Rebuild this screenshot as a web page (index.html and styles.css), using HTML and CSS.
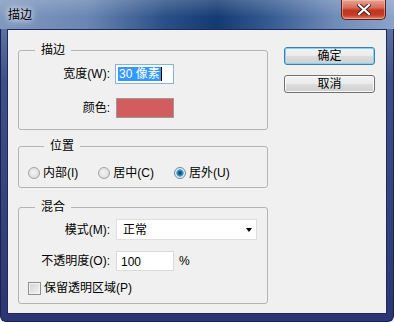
FILE: index.html
```html
<!DOCTYPE html>
<html lang="zh-CN">
<head>
    <meta charset="UTF-8">
    <title>描边</title>
    <link rel="stylesheet" href="styles.css">
</head>
<body>
    <div class="window">
        <div class="titlebar">
            <span class="title">描边</span>
            <span class="close">
                <svg width="14" height="11" viewBox="0 0 14 11">
                    <path d="M2 1 L12 10 M12 1 L2 10" stroke="#3a2020" stroke-width="4" stroke-linecap="square"/>
                    <path d="M2 1 L12 10 M12 1 L2 10" stroke="#ffffff" stroke-width="2.2" stroke-linecap="square"/>
                </svg>
            </span>
        </div>

        <div class="client">
            <div class="main">
                <!-- 描边 -->
                <fieldset class="group g-stroke">
                    <legend>描边</legend>
                    <div class="form">
                        <label>宽度(W):</label>
                        <div class="field focus"><span class="sel">30 像素</span><span class="caret"></span></div>
                        <label>颜色:</label>
                        <div class="swatch"></div>
                    </div>
                </fieldset>

                <!-- 位置 -->
                <fieldset class="group g-pos">
                    <legend>位置</legend>
                    <div class="radios">
                        <span class="radio"><i></i>内部(I)</span>
                        <span class="radio"><i></i>居中(C)</span>
                        <span class="radio checked"><i></i>居外(U)</span>
                    </div>
                </fieldset>

                <!-- 混合 -->
                <fieldset class="group g-blend">
                    <legend>混合</legend>
                    <div class="form">
                        <label>模式(M):</label>
                        <div class="select"><span>正常</span><b class="arrow"></b></div>
                        <label>不透明度(O):</label>
                        <div class="row">
                            <div class="field small">100</div>
                            <span class="unit">%</span>
                        </div>
                    </div>
                    <div class="check"><i></i>保留透明区域(P)</div>
                </fieldset>
            </div>

            <div class="buttons">
                <button class="btn default">确定</button>
                <button class="btn">取消</button>
            </div>
        </div>
    </div>
</body>
</html>
```

FILE: styles.css
```css
body {
    margin: 0;
    font-family: "Liberation Sans", "Noto Sans CJK SC", sans-serif;
    font-size: 12px;
    line-height: 16px;
    color: #000;
}
.window {
    width: 394px;
    height: 322px;
    box-sizing: border-box;
    background: linear-gradient(to bottom, #6d84ae 0%, #3d5189 25%, #2b3672 100%);
    border: 1px solid #1b2250;
    border-top: none;
    border-radius: 0 0 6px 6px;
    display: flex;
    flex-direction: column;
}
.titlebar {
    height: 29px;
    margin: 0 -1px;
    display: flex;
    justify-content: space-between;
    align-items: flex-start;
    padding: 0 8px;
    background:
        linear-gradient(to bottom, rgba(255,255,255,0.18), rgba(255,255,255,0) 60%),
        linear-gradient(to right, #8098c0 0%, #6a86b3 22%, #2a4f86 42%, #143a72 55%, #3a5f95 70%, #6f8bb8 85%, #8ba3c8 100%);
}
.title {
    margin-top: 7px;
    font-size: 12px;
    text-shadow: 0 0 6px #fff, 0 0 10px rgba(255,255,255,0.8);
}
.close {
    width: 45px;
    height: 20px;
    box-sizing: border-box;
    border: 1px solid #5b1d1d;
    border-top: none;
    border-radius: 0 0 5px 5px;
    background: linear-gradient(to bottom, #e8a596 0%, #d66c58 40%, #c2351f 55%, #c53c26 80%, #e08a6e 100%);
    box-shadow: inset 0 0 0 1px rgba(255,200,180,0.5);
    display: flex;
    align-items: center;
    justify-content: center;
}
.client {
    flex: 1;
    margin: 0 6px 7px;
    border: 1px solid #1f2a58;
    background: #f0f0f0;
    display: flex;
    padding: 12px 0 0 10px;
}
.main {
    width: 250px;
}
.group {
    margin: 0;
    padding: 0;
    border: 1px solid #b4b4b4;
    border-radius: 3px;
}
.group legend {
    margin-left: 16px;
    padding: 0 6px;
    line-height: 16px;
}
.g-stroke {
    padding: 6px 0 11px;
}
.g-pos {
    margin-top: 8px;
    padding: 11px 0 6px 9px;
}
.g-blend {
    margin-top: 11px;
    padding: 4px 0 7px;
}
.form {
    display: grid;
    grid-template-columns: 91px auto;
    column-gap: 6px;
    row-gap: 14px;
    align-items: center;
    justify-items: start;
}
.g-blend .form {
    row-gap: 11px;
}
.form label {
    justify-self: end;
}
.field {
    width: 58px;
    height: 20px;
    box-sizing: border-box;
    background: #fff;
    border: 1px solid #dadada;
    padding: 1px 0 0 4px;
    display: flex;
    align-items: center;
}
.field.focus {
    margin-left: -1px;
    width: 59px;
    border-color: #86b2e0;
    padding: 0 0 0 2px;
}
.sel {
    background: #3399ff;
    color: #fff;
    padding: 0 1px;
    line-height: 14px;
}
.caret {
    width: 1px;
    height: 14px;
    background: #000;
}
.swatch {
    width: 58px;
    height: 20px;
    box-sizing: border-box;
    border: 1px solid #9a9a9a;
    background: #d35d5e;
}
.select {
    width: 141px;
    height: 21px;
    box-sizing: border-box;
    background: #fff;
    border: 1px solid #dedede;
    display: flex;
    align-items: center;
    justify-content: space-between;
    padding: 0 4px 0 6px;
}
.arrow {
    width: 0;
    height: 0;
    border-left: 3.5px solid transparent;
    border-right: 3.5px solid transparent;
    border-top: 4px solid #000;
}
.row {
    display: flex;
    align-items: center;
    gap: 5px;
}
.radios {
    display: flex;
    gap: 20px;
}
.radio, .check {
    display: flex;
    align-items: center;
    gap: 3px;
}
.radio i {
    width: 12px;
    height: 12px;
    box-sizing: border-box;
    border-radius: 50%;
    border: 1px solid #a2a2a2;
    background: radial-gradient(circle at 45% 45%, #f4f4f4 0, #e2e2e2 60%, #d0d0d0 100%);
}
.radio.checked i {
    border-color: #6f8aa8;
    background: radial-gradient(circle, #0d3d5e 0, #1f6e9c 2px, #5fb3d8 3.5px, #e8eef4 4px, #d8dde3 100%);
}
.check {
    margin: 9px 0 0 9px;
}
.check i {
    width: 13px;
    height: 13px;
    box-sizing: border-box;
    border: 1px solid #8e8f8f;
    background: linear-gradient(135deg, #d0d0d0, #f5f5f5);
    box-shadow: inset 0 0 0 1px #f4f4f4;
}
.buttons {
    margin: 5px 0 0 16px;
    display: flex;
    flex-direction: column;
    gap: 10px;
}
.btn {
    width: 91px;
    height: 18px;
    padding: 0;
    font: inherit;
    line-height: 14px;
    color: #000;
    border: 1px solid #707070;
    border-radius: 3px;
    background: linear-gradient(to bottom, #f3f3f3 0%, #ebebeb 48%, #dddddd 52%, #cfcfcf 100%);
    box-shadow: inset 0 0 0 1px #fbfbfb;
}
.btn.default {
    border-color: #3c7fb1;
    box-shadow: inset 0 0 0 1px #7fd4f5;
}
```
